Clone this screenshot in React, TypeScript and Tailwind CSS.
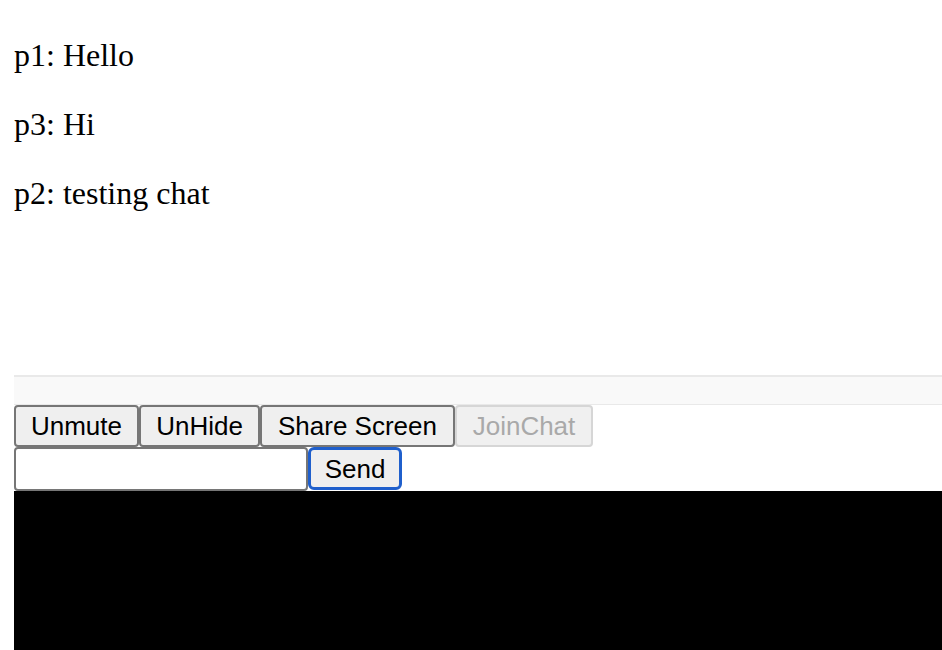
import React from 'react';

const messages = [
  { from: 'p1', text: 'Hello' },
  { from: 'p3', text: 'Hi' },
  { from: 'p2', text: 'testing chat' },
];

const btn =
  "h-[42px] rounded-[4px] border-2 border-[#767676] bg-[#efefef] text-[26px] text-black leading-none flex items-center justify-center";

export default function App() {
  return (
    <div className="h-[650px] bg-white pl-[14px] pt-[37px] overflow-hidden" style={{ fontFamily: '"Liberation Serif", serif' }}>
      <div className="flex flex-col gap-[32px]">
        {messages.map((m, i) => (
          <p key={i} className="text-[32px] leading-[36.8px] text-black">
            {m.from}: {m.text}
          </p>
        ))}
      </div>

      {/* empty remote video area */}
      <div className="h-[164px]" />

      <div className="h-[30px] border-t-2 border-b border-[#e9e9e9] bg-[#f9f9f9]" />

      <div className="flex" style={{ fontFamily: '"Liberation Sans", Arial, sans-serif' }}>
        <button className={`${btn} w-[125px]`}>Unmute</button>
        <button className={`${btn} w-[121px]`}>UnHide</button>
        <button className={`${btn} w-[195px]`}>Share Screen</button>
        <button disabled className="h-[42px] w-[138px] rounded-[4px] border-2 border-[#d6d6d6] bg-[#f0f0f0] text-[26px] text-[#a9a9a9] leading-none flex items-center justify-center">
          JoinChat
        </button>
      </div>

      <div className="flex items-start h-[44px]" style={{ fontFamily: '"Liberation Sans", Arial, sans-serif' }}>
        <input className="h-[44px] w-[294px] rounded-[4px] border-2 border-[#767676] bg-white outline-none" />
        <button className="h-[43px] w-[94px] rounded-[6px] border-[3px] border-[#1f5fcc] bg-[#efefef] text-[26px] text-black leading-none flex items-center justify-center">
          Send
        </button>
      </div>

      <div className="h-[159px] bg-black" />
    </div>
  );
}
